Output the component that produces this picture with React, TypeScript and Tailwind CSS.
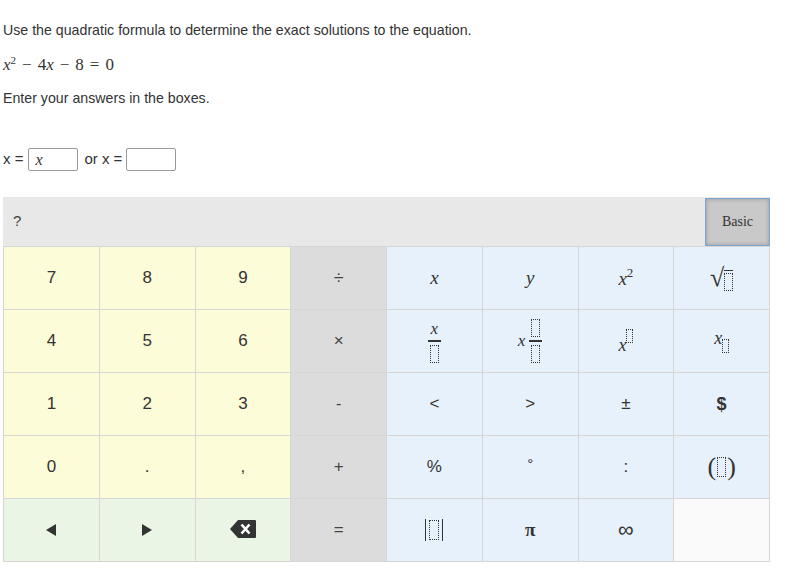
import React from "react";

const Box = ({ w = 9, h = 17 }: { w?: number; h?: number }) => (
  <span
    className="inline-block border border-dotted border-[#333]"
    style={{ width: w, height: h }}
  />
);

const serif = "font-['Liberation_Serif','DejaVu_Serif',serif]";

type Cell = { content: React.ReactNode; bg: string };

const yellow = "bg-[#fdfcd8]";
const gray = "bg-[#dcdcdc]";
const blue = "bg-[#e7f1fb]";
const green = "bg-[#ebf5e6]";

const num = (s: string) => (
  <span className="text-[17px] text-[#333]">{s}</span>
);
const mathI = (s: string) => (
  <span className={`${serif} italic text-[19px] text-[#333]`}>{s}</span>
);

const rows: Cell[][] = [
  [
    { content: num("7"), bg: yellow },
    { content: num("8"), bg: yellow },
    { content: num("9"), bg: yellow },
    { content: <span className="text-[18px] text-[#444]">÷</span>, bg: gray },
    { content: mathI("x"), bg: blue },
    { content: mathI("y"), bg: blue },
    {
      content: (
        <span className={`${serif} text-[19px] text-[#333] leading-none`}>
          <span className="italic">x</span>
          <span className="text-[13px] relative -top-[8px]">2</span>
        </span>
      ),
      bg: blue,
    },
    {
      content: (
        <span className="flex items-end text-[#333]">
          <span className={`${serif} text-[26px] leading-none`}>√</span>
          <span className="border-t border-[#333] pt-[2px] flex">
            <Box w={9} h={18} />
          </span>
        </span>
      ),
      bg: blue,
    },
  ],
  [
    { content: num("4"), bg: yellow },
    { content: num("5"), bg: yellow },
    { content: num("6"), bg: yellow },
    { content: <span className="text-[17px] text-[#444]">×</span>, bg: gray },
    {
      content: (
        <span className="flex flex-col items-center">
          <span className={`${serif} italic text-[17px] leading-[18px] text-[#333]`}>x</span>
          <span className="w-[13px] border-t-2 border-[#333] mt-[2px] mb-[3px]" />
          <Box w={9} h={18} />
        </span>
      ),
      bg: blue,
    },
    {
      content: (
        <span className="flex items-center gap-[4px]">
          <span className={`${serif} italic text-[17px] text-[#333]`}>x</span>
          <span className="flex flex-col items-center">
            <Box w={9} h={18} />
            <span className="w-[13px] border-t-2 border-[#333] my-[3px]" />
            <Box w={9} h={18} />
          </span>
        </span>
      ),
      bg: blue,
    },
    {
      content: (
        <span className="flex items-start">
          <span className={`${serif} italic text-[18px] leading-none text-[#333] mt-[7px]`}>x</span>
          <Box w={7} h={14} />
        </span>
      ),
      bg: blue,
    },
    {
      content: (
        <span className="flex items-end">
          <span className={`${serif} italic text-[18px] leading-none text-[#333] mb-[6px]`}>x</span>
          <Box w={7} h={14} />
        </span>
      ),
      bg: blue,
    },
  ],
  [
    { content: num("1"), bg: yellow },
    { content: num("2"), bg: yellow },
    { content: num("3"), bg: yellow },
    { content: <span className="text-[16px] text-[#444]">-</span>, bg: gray },
    { content: <span className="text-[17px] text-[#333]">&lt;</span>, bg: blue },
    { content: <span className="text-[17px] text-[#333]">&gt;</span>, bg: blue },
    { content: <span className="text-[17px] text-[#333]">±</span>, bg: blue },
    { content: <span className="text-[18px] text-[#333] font-bold">$</span>, bg: blue },
  ],
  [
    { content: num("0"), bg: yellow },
    { content: num("."), bg: yellow },
    { content: num(","), bg: yellow },
    { content: <span className="text-[17px] text-[#444]">+</span>, bg: gray },
    { content: <span className="text-[17px] text-[#333]">%</span>, bg: blue },
    { content: <span className="text-[15px] text-[#333] relative -top-[3px]">°</span>, bg: blue },
    { content: <span className="text-[17px] text-[#333]">:</span>, bg: blue },
    {
      content: (
        <span className="flex items-center gap-[1px] text-[#333]">
          <span className={`${serif} text-[26px] leading-none`}>(</span>
          <Box w={9} h={20} />
          <span className={`${serif} text-[26px] leading-none`}>)</span>
        </span>
      ),
      bg: blue,
    },
  ],
  [
    {
      content: (
        <svg width="10" height="12" viewBox="0 0 10 12">
          <path d="M10 0 L0 6 L10 12 Z" fill="#333" />
        </svg>
      ),
      bg: green,
    },
    {
      content: (
        <svg width="10" height="12" viewBox="0 0 10 12">
          <path d="M0 0 L10 6 L0 12 Z" fill="#333" />
        </svg>
      ),
      bg: green,
    },
    {
      content: (
        <svg width="26" height="18" viewBox="0 0 26 18" className="relative -top-[1px]">
          <path d="M8 0 H25 a1 1 0 0 1 1 1 V17 a1 1 0 0 1 -1 1 H8 L0 9 Z" fill="#333" />
          <path d="M11.5 4.5 L19.5 13.5 M19.5 4.5 L11.5 13.5" stroke="#fff" strokeWidth="2.6" />
        </svg>
      ),
      bg: green,
    },
    { content: <span className="text-[17px] text-[#444]">=</span>, bg: gray },
    {
      content: (
        <span className="flex items-center gap-[3px]">
          <span className="w-[1px] h-[22px] bg-[#333]" />
          <Box w={10} h={20} />
          <span className="w-[1px] h-[22px] bg-[#333]" />
        </span>
      ),
      bg: blue,
    },
    {
      content: (
        <span className={`${serif} font-bold text-[19px] text-[#333]`}>π</span>
      ),
      bg: blue,
    },
    { content: <span className="text-[22px] text-[#333] leading-none">∞</span>, bg: blue },
    { content: null, bg: "bg-[#fafafa]" },
  ],
];

export default function App() {
  return (
    <div className="w-[793px] h-[569px] bg-white font-['Liberation_Sans',Arial,sans-serif] text-[#333] overflow-hidden">
      <div className="px-[3px] pt-[21px]">
        <p className="text-[14.2px] leading-[18px] text-[#333]">
          Use the quadratic formula to determine the exact solutions to the equation.
        </p>
        <p className={`${serif} text-[17px] leading-[20px] mt-[16px] text-[#333]`}>
          <i>x</i>
          <span className="text-[11px] relative -top-[6px]">2</span>
          <span className="mx-[6px]">−</span>4<i>x</i>
          <span className="mx-[6px]">−</span>8<span className="mx-[6px]">=</span>0
        </p>
        <p className="text-[14.2px] leading-[18px] mt-[13px] text-[#333]">
          Enter your answers in the boxes.
        </p>
        <div className="flex items-center mt-[41px] text-[15px] text-[#333]">
          <span>x =</span>
          <span className="ml-[5px] w-[50px] h-[23px] border border-[#999] rounded-[2px] flex items-center pl-[6px]">
            <span className={`${serif} italic text-[16px]`}>x</span>
          </span>
          <span className="ml-[6px]">or x =</span>
          <span className="ml-[4px] w-[50px] h-[23px] border border-[#999] rounded-[2px]" />
        </div>
      </div>

      <div className="ml-[3px] mt-[26px] w-[767px]">
        <div className="h-[49px] bg-[#e8e8e8] flex items-center justify-between">
          <span className="ml-[10px] text-[15px] text-[#444]">?</span>
          <span
            className={`${serif} w-[65px] h-[48px] bg-[#c9c9c9] border border-[#7aa6cf] flex items-center justify-center text-[14px] text-[#333] shadow-[inset_0_0_4px_rgba(0,0,0,0.25)]`}
          >
            Basic
          </span>
        </div>
        <div className="grid grid-cols-8 border-b border-l border-[#d6d6d6]">
          {rows.flat().map((c, i) => (
            <div
              key={i}
              className={`${c.bg} h-[63px] border-r border-t border-[#d6d6d6] flex items-center justify-center`}
            >
              {c.content}
            </div>
          ))}
        </div>
      </div>
    </div>
  );
}
